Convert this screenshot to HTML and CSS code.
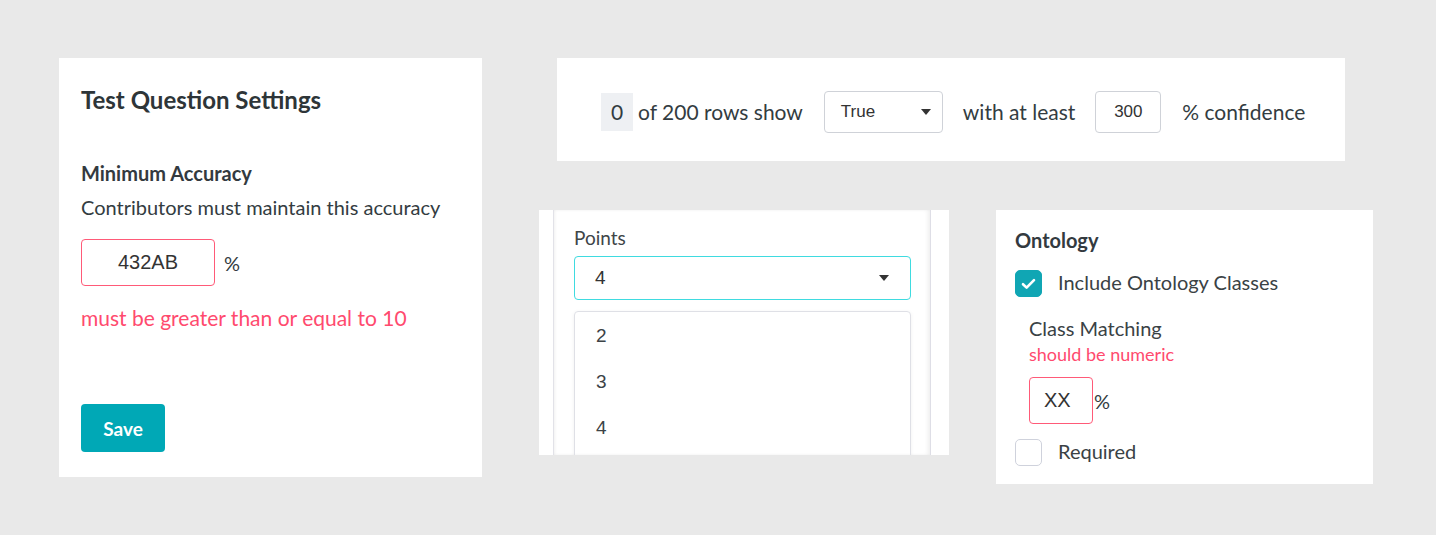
FILE: index.html
```html
<!DOCTYPE html>
<html lang="en">
<head>
<meta charset="utf-8">
<title>Settings</title>
<link rel="stylesheet" href="styles.css">
</head>
<body>
<div class="page">
  <section class="card settings">
    <h2 class="title">Test Question Settings</h2>
    <div class="label-bold">Minimum Accuracy</div>
    <div class="desc">Contributors must maintain this accuracy</div>
    <div class="field-row">
      <div class="input error-input wide">432AB</div>
      <span class="pct">%</span>
    </div>
    <div class="error-text">must be greater than or equal to 10</div>
    <button class="btn-save">Save</button>
  </section>

  <div class="right">
    <section class="card rows-card">
      <span class="count">0</span>
      <span class="rows-text">of 200 rows show</span>
      <div class="select small-select">
        <span>True</span>
        <svg class="caret" width="10" height="6" viewBox="0 0 10 6"><path d="M0 0h10L5 6z" fill="#333"/></svg>
      </div>
      <span class="rows-text">with at least</span>
      <div class="input num-input">300</div>
      <span class="rows-text">% confidence</span>
    </section>

    <div class="bottom">
      <section class="points-panel">
        <div class="points-inner">
          <div class="points-label">Points</div>
          <div class="select points-select">
            <span>4</span>
            <svg class="caret" width="10" height="6" viewBox="0 0 10 6"><path d="M0 0h10L5 6z" fill="#333"/></svg>
          </div>
          <ul class="menu">
            <li>2</li>
            <li>3</li>
            <li>4</li>
          </ul>
        </div>
      </section>

      <section class="card ontology">
        <div class="label-bold">Ontology</div>
        <div class="check-row">
          <span class="checkbox checked">
            <svg width="15" height="12" viewBox="0 0 15 12"><path d="M2 6.2l3.6 3.4L13 2.2" fill="none" stroke="#fff" stroke-width="2.6" stroke-linecap="round" stroke-linejoin="round"/></svg>
          </span>
          <span class="check-text">Include Ontology Classes</span>
        </div>
        <div class="sub">
          <div class="sub-label">Class Matching</div>
          <div class="sub-error">should be numeric</div>
          <div class="field-row tight">
            <div class="input error-input xx">XX</div>
            <span class="pct2">%</span>
          </div>
        </div>
        <div class="check-row req">
          <span class="checkbox"></span>
          <span class="check-text">Required</span>
        </div>
      </section>
    </div>
  </div>
</div>
</body>
</html>
```

FILE: styles.css
```css
* { box-sizing: border-box; }
html, body { margin: 0; padding: 0; }
body {
  background: #e9e9e9;
  font-family: Lato, "Open Sans", sans-serif;
  color: #333c41;
  width: 1436px;
  height: 535px;
  overflow: hidden;
}
.page {
  display: flex;
  align-items: flex-start;
  padding: 58px 0 0 59px;
  gap: 57px;
}
.card { background: #fff; }

/* card 1 */
.settings {
  width: 423px;
  height: 419px;
  padding: 27px 22px 0 22px;
}
.title {
  margin: 0;
  font-size: 24px;
  line-height: 30px;
  font-weight: 700;
  color: #2e3538;
}
.label-bold {
  font-size: 20px;
  line-height: 24px;
  font-weight: 700;
  color: #333a3f;
}
.settings .label-bold { margin-top: 46px; }
.desc {
  font-size: 20px;
  line-height: 24px;
  margin-top: 10px;
}
.field-row {
  display: flex;
  align-items: center;
  gap: 9px;
  margin-top: 20px;
}
.input {
  border: 1px solid #cfd2d8;
  border-radius: 4px;
  font-family: "Liberation Sans", Arial, sans-serif;
  color: #333;
  display: flex;
  align-items: center;
}
.error-input { border-color: #ff5a78; }
.wide {
  width: 134px;
  height: 47px;
  justify-content: center;
  font-size: 20px;
}
.pct { font-size: 20px; }
.error-text {
  color: #ff4a6e;
  font-size: 21px;
  line-height: 24px;
  margin-top: 20px;
}
.btn-save {
  display: block;
  margin-top: 74px;
  width: 84px;
  height: 48px;
  border: 0;
  border-radius: 4px;
  background: #00a8b6;
  color: #fff;
  font-family: Lato, sans-serif;
  font-weight: 700;
  font-size: 19px;
  padding: 0;
}

/* right column */
.right {
  display: flex;
  flex-direction: column;
  gap: 49px;
}
.rows-card {
  margin-left: 18px;
  width: 788px;
  height: 103px;
  display: flex;
  align-items: center;
  padding: 4px 0 0 44px;
}
.count {
  background: #eef0f3;
  width: 32px;
  height: 38px;
  display: flex;
  align-items: center;
  justify-content: center;
  font-size: 21px;
  margin-right: 5px;
}
.rows-text { font-size: 21px; }
.select {
  display: flex;
  align-items: center;
  justify-content: space-between;
  border: 1px solid #cfd2d8;
  border-radius: 4px;
  font-family: "Liberation Sans", Arial, sans-serif;
  color: #333;
}
.small-select {
  width: 119px;
  height: 42px;
  margin: 0 20px 0 21px;
  padding: 0 11px 0 16px;
  font-size: 17px;
}
.num-input {
  width: 66px;
  height: 42px;
  justify-content: center;
  font-size: 17px;
  margin: 0 21px 0 20px;
}

.bottom {
  display: flex;
  align-items: flex-start;
  gap: 47px;
}
.points-panel {
  width: 410px;
  height: 245px;
  background: #fff;
  padding: 0 18px 0 14px;
  overflow: hidden;
}
.points-inner {
  height: 100%;
  background: #fff;
  border-left: 1px solid #e2e2e8;
  border-right: 1px solid #dedee6;
  box-shadow: 2px 0 3px -1px rgba(0,0,0,0.06) inset, -3px 0 4px -1px rgba(0,0,0,0.07) inset;
  padding: 17px 19px 0 20px;
  overflow: hidden;
}
.points-label {
  font-size: 19px;
  line-height: 22px;
  color: #3e4548;
}
.points-select {
  margin-top: 7px;
  height: 44px;
  border: 1.5px solid #3fdbe0;
  padding: 0 21px 0 20px;
  font-size: 19px;
}
.menu {
  list-style: none;
  margin: 11px 0 0 0;
  padding: 1px 0 0 0;
  height: 170px;
  border: 1px solid #dfe0e6;
  border-radius: 4px;
  box-shadow: 0 1px 4px rgba(0,0,0,0.06);
  font-family: "Liberation Sans", Arial, sans-serif;
  font-size: 19px;
  color: #3c4346;
}
.menu li {
  height: 46px;
  line-height: 46px;
  padding-left: 21px;
}

/* ontology */
.ontology {
  width: 377px;
  height: 274px;
  padding: 18px 19px 0 19px;
}
.check-row {
  display: flex;
  align-items: center;
  gap: 16px;
  margin-top: 18px;
}
.checkbox {
  width: 27px;
  height: 27px;
  flex: none;
  border: 1px solid #cfd2dc;
  border-radius: 5px;
  display: flex;
  align-items: center;
  justify-content: center;
  background: #fff;
}
.checkbox.checked { background: #10a6b4; border-color: #10a6b4; }
.check-text { font-size: 20px; line-height: 24px; color: #3a4245; margin-bottom: 3px; }
.sub { padding-left: 14px; margin-top: 19px; }
.sub-label { font-size: 20px; line-height: 24px; color: #3a4245; }
.sub-error { font-size: 18px; line-height: 20px; color: #ff4a6e; margin-top: 4px; }
.tight { gap: 1px; margin-top: 13px; }
.xx {
  width: 64px;
  height: 47px;
  padding-left: 14px;
  font-size: 20px;
}
.pct2 { font-size: 20px; }
.check-row.req { margin-top: 15px; }
```
